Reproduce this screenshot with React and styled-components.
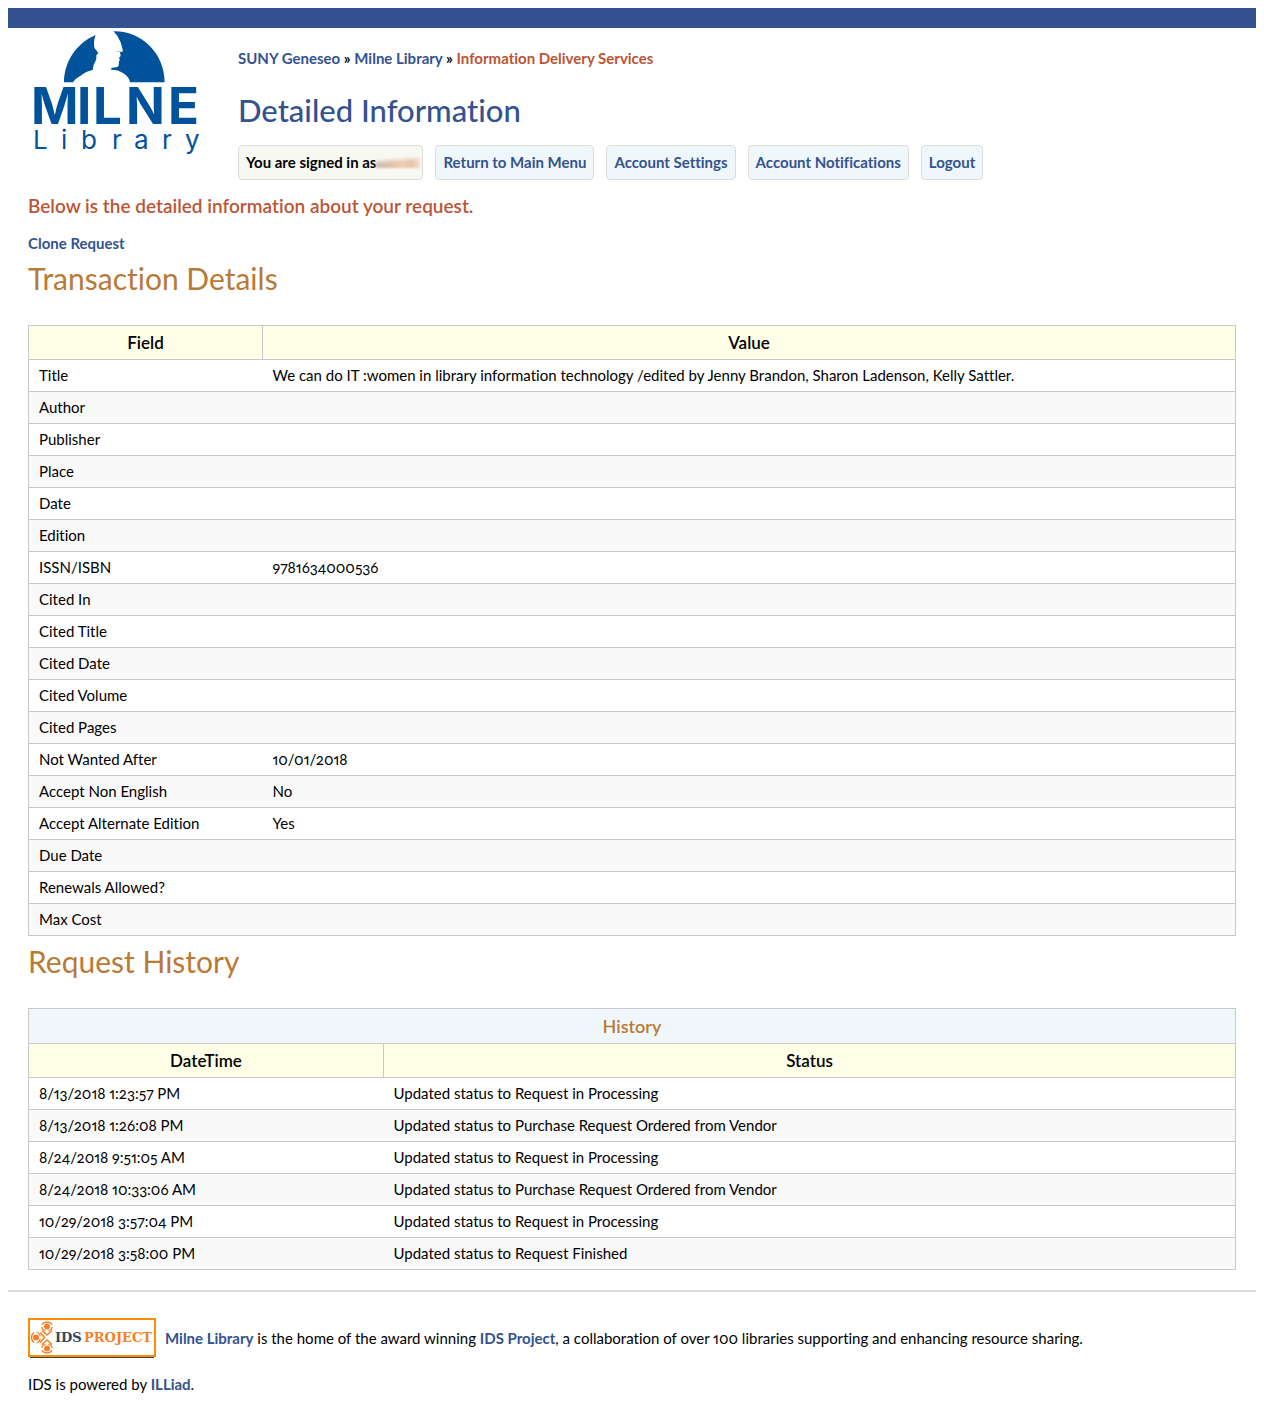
import React from "react";
import styled, { createGlobalStyle } from "styled-components";

const GlobalStyle = createGlobalStyle`
  *, *::before, *::after { box-sizing: border-box; }
  body {
    margin: 8px;
    background: #fff;
    color: #000;
    font-family: Lato, "Open Sans", sans-serif;
    font-size: 15px;
    line-height: 19px;
    font-variant-numeric: oldstyle-nums proportional-nums;
    font-variant-ligatures: no-common-ligatures;
  }
`;

const TopBar = styled.div`
  height: 20px;
  background: #34528f;
`;

const Header = styled.header`
  display: flex;
  align-items: flex-start;
  gap: 30px;
  padding: 0 20px;
`;

const LogoLink = styled.a`
  display: block;
  flex: none;
  width: 180px;
  height: 132px;
  svg { display: block; }
`;

const HeaderText = styled.div`
  flex: 1;
  padding-top: 21px;
`;

const Link = styled.a`
  color: #34528f;
  font-weight: 700;
  text-decoration: none;
`;

const Breadcrumb = styled.nav`
  font-weight: 700;
`;

const Current = styled.span`
  color: #ba5536;
`;

const PageTitle = styled.h1`
  margin: 22px 0 15px;
  color: #34528f;
  font-size: 31px;
  font-weight: 500;
  line-height: 40px;
`;

const Menu = styled.ul`
  display: flex;
  flex-wrap: wrap;
  gap: 12px;
  margin: 0;
  padding: 0;
  list-style: none;
`;

const MenuItem = styled.li`
  display: flex;
  align-items: center;
  padding: 7px;
  border: 1px solid #dcdcdc;
  border-radius: 4px;
  background: ${(p) => (p.$plain ? "#f8f8f2" : "#f0f7fb")};
  font-weight: 700;
`;

const HiddenName = styled.span`
  width: 44px;
  height: 11px;
  margin-right: -5px;
  background: linear-gradient(175deg, #f8f8f2 15%, transparent 50%),
    linear-gradient(90deg, #c4bdb6, #e2c0a5 35%, #ecceb6 60%, #e5c4aa 80%, #f0dfd0);
  filter: blur(1px);
`;

const Main = styled.main`
  padding: 14px 20px 20px;
`;

const Message = styled.p`
  margin: 0 0 16px;
  color: #ba5536;
  font-size: 19px;
  font-weight: 600;
  line-height: 24px;
`;

const SectionTitle = styled.h2`
  margin: 5px 0 27px;
  color: #b97a37;
  font-size: 30px;
  font-weight: 400;
  line-height: 40px;
`;

const Table = styled.table`
  width: 100%;
  border: 1px solid #c8c8c8;
  border-collapse: collapse;
`;

const HeadCell = styled.th`
  width: ${(p) => p.$width || "auto"};
  padding: 6px 10px;
  border: 1px solid #c8c8c8;
  background: #ffffe8;
  font-size: 17px;
  font-weight: 600;
  line-height: 21px;
`;

const CaptionCell = styled(HeadCell)`
  background: #f0f7fb;
  color: #b97a37;
  font-size: 18px;
  line-height: 22px;
`;

const Row = styled.tr`
  border-bottom: 1px solid #c8c8c8;
  &:nth-child(even) { background: #f9f9f9; }
`;

const Cell = styled.td`
  height: 32px;
  padding: 6px 10px;
`;

const Footer = styled.footer`
  padding: 26px 20px 20px;
  border-top: 2px solid #dcdcdc;
`;

const FooterLine = styled.div`
  display: flex;
  align-items: center;
  gap: 9px;
  margin-bottom: 17px;
`;

const IdsLink = styled.a`
  display: block;
  flex: none;
  width: 128px;
  height: 40px;
  svg { display: block; }
`;

const Text = styled.p`
  margin: 0;
`;

const DETAILS = [
  ["Title", "We can do IT :women in library information technology /edited by Jenny Brandon, Sharon Ladenson, Kelly Sattler."],
  ["Author", ""],
  ["Publisher", ""],
  ["Place", ""],
  ["Date", ""],
  ["Edition", ""],
  ["ISSN/ISBN", "9781634000536"],
  ["Cited In", ""],
  ["Cited Title", ""],
  ["Cited Date", ""],
  ["Cited Volume", ""],
  ["Cited Pages", ""],
  ["Not Wanted After", "10/01/2018"],
  ["Accept Non English", "No"],
  ["Accept Alternate Edition", "Yes"],
  ["Due Date", ""],
  ["Renewals Allowed?", ""],
  ["Max Cost", ""],
];

const HISTORY = [
  ["8/13/2018 1:23:57 PM", "Updated status to Request in Processing"],
  ["8/13/2018 1:26:08 PM", "Updated status to Purchase Request Ordered from Vendor"],
  ["8/24/2018 9:51:05 AM", "Updated status to Request in Processing"],
  ["8/24/2018 10:33:06 AM", "Updated status to Purchase Request Ordered from Vendor"],
  ["10/29/2018 3:57:04 PM", "Updated status to Request in Processing"],
  ["10/29/2018 3:58:00 PM", "Updated status to Request Finished"],
];

const MENU = ["Return to Main Menu", "Account Settings", "Account Notifications", "Logout"];

function MilneLogo() {
  return (
    <svg width="180" height="132" viewBox="0 0 180 132" role="img" aria-label="Milne Library">
      <g fill="#00529b" transform="translate(32 0) scale(.33333)">
        <path d="M12 163C12 103 48 46 107 21C101 36 101 52 104 61L115 75L109 82L109 93L105 103L101 110L98 126C82 129 72 135 61 144C50 150 43 156 39 163Z" />
        <path d="M160 10C246 8 314 78 314 163L210 163C209 144 182 124 153 125L155 119L170 118L176 114L177 99L180 96L177 90L182 84L180 73L163 68L183 72L189 70L186 57L182 43L171 22Z" />
      </g>
      <g fill="#00529b" fontFamily="Inter, sans-serif">
        <text x="3 49 65 98 140" y="96" fontSize="51" fontWeight="700">MILNE</text>
        <text x="5 33 53 84 106 134 157" y="121" fontSize="26" fontWeight="400">Library</text>
      </g>
    </svg>
  );
}

function Person({ angle }) {
  return (
    <g transform={`rotate(${angle} 19 19.5)`} fill="none" stroke="#f58025">
      <circle cx="19" cy="8.500" r="3" fill="#f58025" stroke="none" />
      <path d="M14 6.500Q16 4 19 4Q22 4 24 6.500" strokeWidth="1.500" />
      <path d="M13.500 9Q14.500 12 17.500 12.800M24.500 9Q23.500 12 20.500 12.800" strokeWidth="1.200" />
      <path d="M14 12.500L19 17L24 12.500" strokeWidth="1.600" />
    </g>
  );
}

function IdsLogo() {
  return (
    <svg width="128" height="40" viewBox="0 0 128 40" role="img" aria-label="IDS Project">
      <rect x="1" y="1" width="126" height="37" fill="#fff" stroke="#ff8c00" strokeWidth="2" />
      <path d="M2 39.500H126" stroke="#444055" />
      <Person angle={0} />
      <Person angle={180} />
      <Person angle={270} />
      <g fontFamily="'DejaVu Serif', serif" fontSize="13" fontWeight="700">
        <text x="27" y="24" fill="#34465a">IDS</text>
        <text x="56" y="24" fill="#f58025">PROJECT</text>
      </g>
    </svg>
  );
}

export default function App() {
  return (
    <>
      <GlobalStyle />
      <TopBar />
      <Header>
        <LogoLink href="#library"><MilneLogo /></LogoLink>
        <HeaderText>
          <Breadcrumb>
            <Link href="#geneseo">SUNY Geneseo</Link> » <Link href="#library">Milne Library</Link> »{" "}
            <Current>Information Delivery Services</Current>
          </Breadcrumb>
          <PageTitle>Detailed Information</PageTitle>
          <Menu>
            <MenuItem $plain>You are signed in as<HiddenName /></MenuItem>
            {MENU.map((label) => (
              <MenuItem key={label}><Link href="#menu">{label}</Link></MenuItem>
            ))}
          </Menu>
        </HeaderText>
      </Header>
      <Main>
        <Message>Below is the detailed information about your request.</Message>
        <Link href="#clone">Clone Request</Link>
        <SectionTitle>Transaction Details</SectionTitle>
        <Table>
          <thead>
            <tr>
              <HeadCell scope="col" $width="234px">Field</HeadCell>
              <HeadCell scope="col">Value</HeadCell>
            </tr>
          </thead>
          <tbody>
            {DETAILS.map(([field, value]) => (
              <Row key={field}><Cell>{field}</Cell><Cell>{value}</Cell></Row>
            ))}
          </tbody>
        </Table>
        <SectionTitle>Request History</SectionTitle>
        <Table>
          <thead>
            <tr><CaptionCell scope="colgroup" colSpan={2}>History</CaptionCell></tr>
            <tr>
              <HeadCell scope="col" $width="355px">DateTime</HeadCell>
              <HeadCell scope="col">Status</HeadCell>
            </tr>
          </thead>
          <tbody>
            {HISTORY.map(([time, status]) => (
              <Row key={time}><Cell>{time}</Cell><Cell>{status}</Cell></Row>
            ))}
          </tbody>
        </Table>
      </Main>
      <Footer>
        <FooterLine>
          <IdsLink href="#ids"><IdsLogo /></IdsLink>
          <Text>
            <Link href="#library">Milne Library</Link> is the home of the award winning{" "}
            <Link href="#ids">IDS Project</Link>, a collaboration of over 100 libraries supporting and enhancing resource sharing.
          </Text>
        </FooterLine>
        <Text>IDS is powered by <Link href="#illiad">ILLiad</Link>.</Text>
      </Footer>
    </>
  );
}
